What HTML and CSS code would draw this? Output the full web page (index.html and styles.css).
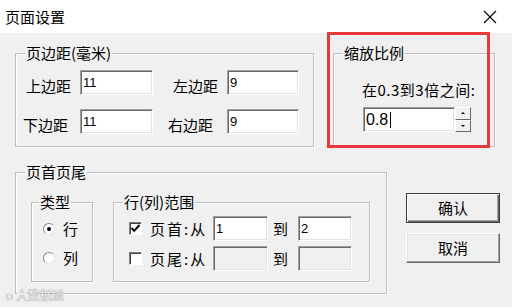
FILE: index.html
```html
<!DOCTYPE html>
<html>
  <head>
    <title>页面设置</title>
    <link rel="stylesheet" href="styles.css">
  </head>
  <body>
    <div class="window">
      <div class="titlebar">
        <span class="title">页面设置</span>
        <svg class="close" width="14" height="14" viewBox="0 0 14 14">
          <path d="M1 1 L13 13 M13 1 L1 13" stroke="#000" stroke-width="1.1" fill="none"/>
        </svg>
      </div>

      <div class="content">
        <div class="row row-top">
          <fieldset class="group margins">
            <legend>页边距(毫米)</legend>
            <div class="field-row">
              <span class="lbl">上边距</span>
              <div class="edit w73">11</div>
              <span class="lbl lbl-right">左边距</span>
              <div class="edit w72">9</div>
            </div>
            <div class="field-row second">
              <span class="lbl shift">下边距</span>
              <div class="edit w73">11</div>
              <span class="lbl lbl-right shift">右边距</span>
              <div class="edit w72">9</div>
            </div>
          </fieldset>

          <fieldset class="group scale">
            <legend>缩放比例</legend>
            <div class="scale-inner">
              <div class="hint">在0.3到3倍之间:</div>
              <div class="spin">
                <div class="edit spin-edit">0.8<span class="caret"></span></div>
                <div class="spin-btns">
                  <span class="spin-btn"><span class="arrow up"></span></span>
                  <span class="spin-btn"><span class="arrow down"></span></span>
                </div>
              </div>
            </div>
          </fieldset>
        </div>

        <div class="row row-bottom">
          <fieldset class="group header-footer">
            <legend>页首页尾</legend>
            <fieldset class="group type">
              <legend>类型</legend>
              <div class="option"><span class="radio checked"></span><span>行</span></div>
              <div class="option"><span class="radio"></span><span>列</span></div>
            </fieldset>
            <fieldset class="group range">
              <legend>行(列)范围</legend>
              <div class="range-row">
                <span class="check">
                  <svg width="11" height="11" viewBox="0 0 11 11">
                    <path d="M1.5 5 L4.2 7.8 L9.5 2" stroke="#000" stroke-width="2" fill="none"/>
                  </svg>
                </span>
                <span class="range-lbl">页首:从</span>
                <div class="edit w55">1</div>
                <span class="to">到</span>
                <div class="edit w54">2</div>
              </div>
              <div class="range-row">
                <span class="check"></span>
                <span class="range-lbl">页尾:从</span>
                <div class="edit w55 disabled"></div>
                <span class="to">到</span>
                <div class="edit w54 disabled"></div>
              </div>
            </fieldset>
          </fieldset>

          <div class="buttons">
            <div class="btn default">确认</div>
            <div class="btn">取消</div>
          </div>
        </div>
      </div>

      <div class="highlight"></div>
      <div class="watermark"><span class="wm-logo">ပ</span>大数据派</div>
    </div>
  </body>
</html>
```

FILE: styles.css
```css
body {
  margin: 0;
  font-family: "Noto Sans CJK SC", sans-serif;
  font-size: 15px;
  color: #000;
}

.window {
  position: relative;
  width: 512px;
  height: 307px;
  background-color: #f0f0f0;
  overflow: hidden;
}

.titlebar {
  height: 33px;
  background-color: #fff;
  display: flex;
  align-items: center;
  justify-content: space-between;
  padding: 0 15px 0 5px;
}
.title {
  line-height: 16px;
}

.content {
  padding-top: 12px;
}

.row {
  display: flex;
  padding-left: 15px;
}
.row-bottom {
  margin-top: 17px;
}

/* group boxes */
.group {
  box-sizing: border-box;
  margin: 0;
  min-width: 0;
  padding: 0 0 0 9px;
  border: 1px solid #bdbdbd;
  box-shadow: inset 1px 1px 0 #fff, 1px 1px 0 #fff;
}
.group legend {
  padding: 0 1px;
  line-height: 16px;
  background-color: #f0f0f0;
}

.margins {
  width: 299px;
  height: 102px;
  padding-top: 9px;
}
.field-row {
  display: flex;
  margin-left: 1px;
}
.field-row.second {
  margin-top: 11px;
}
.lbl {
  width: 54px;
  line-height: 25px;
  padding-top: 3px;
  box-sizing: border-box;
}
.lbl-right {
  margin-left: 20px;
}
.shift {
  text-indent: -3px;
}
.shift.lbl-right {
  text-indent: -5px;
}

.scale {
  width: 162px;
  height: 102px;
  margin-left: 19px;
}
.scale-inner {
  padding: 20px 0 0 20px;
}
.hint {
  line-height: 17px;
  letter-spacing: 0.5px;
  margin-left: -1px;
}
.spin {
  display: flex;
  margin-top: 9px;
}
.spin-btns {
  display: flex;
  flex-direction: column;
}
.spin-btn {
  box-sizing: border-box;
  width: 16px;
  height: 12.5px;
  background-color: #f0f0f0;
  border: 1px solid;
  border-color: #fff #696969 #696969 #fff;
  display: flex;
  align-items: center;
  justify-content: center;
}
.arrow {
  width: 0;
  height: 0;
  border-left: 2px solid transparent;
  border-right: 2px solid transparent;
}
.arrow.up {
  border-bottom: 2px solid #000;
}
.arrow.down {
  border-top: 2px solid #000;
}

/* edit boxes */
.edit {
  box-sizing: border-box;
  height: 25px;
  background-color: #fff;
  font-family: "Liberation Sans", sans-serif;
  font-size: 13px;
  line-height: 15px;
  padding: 4px 2px;
  border: 1px solid;
  border-color: #a0a0a0 #fff #fff #a0a0a0;
  box-shadow: inset 1px 1px 0 #696969, inset -1px -1px 0 #e3e3e3;
}
.edit.disabled {
  background-color: #f0f0f0;
}
.w73 { width: 73px; }
.w72 { width: 72px; }
.w55 { width: 55px; }
.w54 { width: 54px; }

.spin-edit {
  width: 92px;
  font-size: 16px;
  line-height: 17px;
  padding: 3px 2px;
  display: flex;
  align-items: center;
}
.caret {
  width: 1px;
  height: 16px;
  background-color: #000;
  margin-left: 2px;
}

/* header / footer */
.header-footer {
  display: flex;
  width: 372px;
  height: 130px;
  padding-top: 14px;
}
.type {
  width: 62px;
  height: 88px;
  margin-left: 6px;
  padding-top: 4px;
}
.type legend {
  margin-left: -2px;
}
.option {
  display: flex;
  align-items: center;
  gap: 8px;
  height: 29px;
  margin-left: 2px;
}
.radio {
  box-sizing: border-box;
  width: 12px;
  height: 12px;
  border-radius: 50%;
  background-color: #fff;
  border: 1px solid;
  border-color: #8a8a8a #e3e3e3 #e3e3e3 #8a8a8a;
  display: flex;
  align-items: center;
  justify-content: center;
}
.radio.checked::after {
  content: "";
  width: 4px;
  height: 4px;
  border-radius: 50%;
  background-color: #000;
}

.range {
  width: 257px;
  height: 88px;
  margin-left: 20px;
  padding-top: 6px;
}
.range-row {
  display: flex;
  align-items: center;
  margin-left: 6px;
}
.range-row + .range-row {
  margin-top: 5px;
}
.check {
  box-sizing: border-box;
  width: 13px;
  height: 13px;
  background-color: #fff;
  border: 1px solid;
  border-color: #808080 #fff #fff #808080;
  box-shadow: inset 1px 1px 0 #404040;
  display: flex;
  align-items: center;
  justify-content: center;
}
.range-lbl {
  width: 63px;
  margin-left: 8px;
  letter-spacing: 2px;
}
.to {
  margin: 0 10px 0 5px;
}

/* buttons */
.buttons {
  display: flex;
  flex-direction: column;
  gap: 10px;
  margin: 29px 0 0 19px;
}
.btn {
  box-sizing: border-box;
  width: 94px;
  height: 30px;
  background-color: #f0f0f0;
  border: 1px solid;
  border-color: #fff #696969 #696969 #fff;
  box-shadow: inset -1px -1px 0 #a0a0a0, inset 1px 1px 0 #e3e3e3;
  text-align: center;
  line-height: 28px;
}
.btn.default {
  border-color: #3c3c3c;
  box-shadow: inset 1px 1px 0 #fff, inset -1px -1px 0 #696969, inset -2px -2px 0 #a0a0a0;
}

/* overlays */
.highlight {
  position: absolute;
  left: 327px;
  top: 32px;
  width: 157px;
  height: 110px;
  border: 3px solid #e8393c;
}
.watermark {
  position: absolute;
  left: 6px;
  top: 288px;
  font-size: 12px;
  line-height: 14px;
  color: #f4f4f4;
  text-shadow: 0 0 1px #8c8c8c, 0 0 1px #8c8c8c;
}
.wm-logo {
  font-family: "DejaVu Sans", sans-serif;
  margin-right: 4px;
}
```
